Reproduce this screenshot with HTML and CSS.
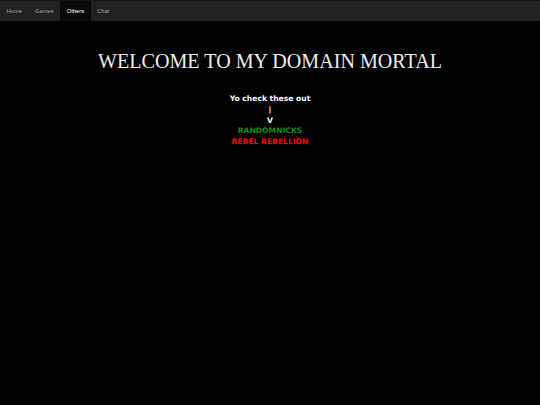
FILE: index.html
```html
<!DOCTYPE html>
<html>
<head>
<meta charset="utf-8">
<title>Others</title>
<link rel="stylesheet" href="styles.css">
</head>
<body>
<nav class="topnav">
  <a class="nav-item" href="#">Home</a>
  <a class="nav-item" href="#">Games</a>
  <a class="nav-item active" href="#">Others</a>
  <a class="nav-item" href="#">Chat</a>
</nav>
<main class="content">
  <h1 class="title">WELCOME TO MY DOMAIN MORTAL</h1>
  <div class="links">
    <div class="line">Yo check these out</div>
    <div class="line">|</div>
    <div class="line">V</div>
    <div class="line green">RANDOMNICKS</div>
    <div class="line red">REBEL REBELLION</div>
  </div>
</main>
</body>
</html>
```
FILE: styles.css
```css
html, body {
  margin: 0;
  padding: 0;
  background: #000;
}
body {
  font-family: "Liberation Serif", serif;
  color: #fff;
}
.topnav {
  display: flex;
  height: 20px;
  background: #222;
  border-top: 1px solid #151515;
}
.nav-item {
  display: flex;
  align-items: center;
  padding: 0 6.5px;
  font-family: "Liberation Sans", Arial, sans-serif;
  font-size: 5.8px;
  color: #a0a0a0;
  text-decoration: none;
}
.nav-item.active {
  background: #0a0a0a;
  color: #fff;
}
.content {
  display: flex;
  flex-direction: column;
  align-items: center;
}
.title {
  margin: 29px 0 0 0;
  font-family: "Liberation Serif", serif;
  font-weight: normal;
  font-size: 20.1px;
  line-height: 23px;
  color: #eee;
}
.links {
  margin-top: 21px;
  display: flex;
  flex-direction: column;
  align-items: center;
  font-family: "DejaVu Sans", Verdana, sans-serif;
  font-weight: bold;
  font-size: 7.6px;
  line-height: 10.75px;
  color: #fff;
}
.green { color: #0f8a14; }
.red { color: #ff0000; }
```
